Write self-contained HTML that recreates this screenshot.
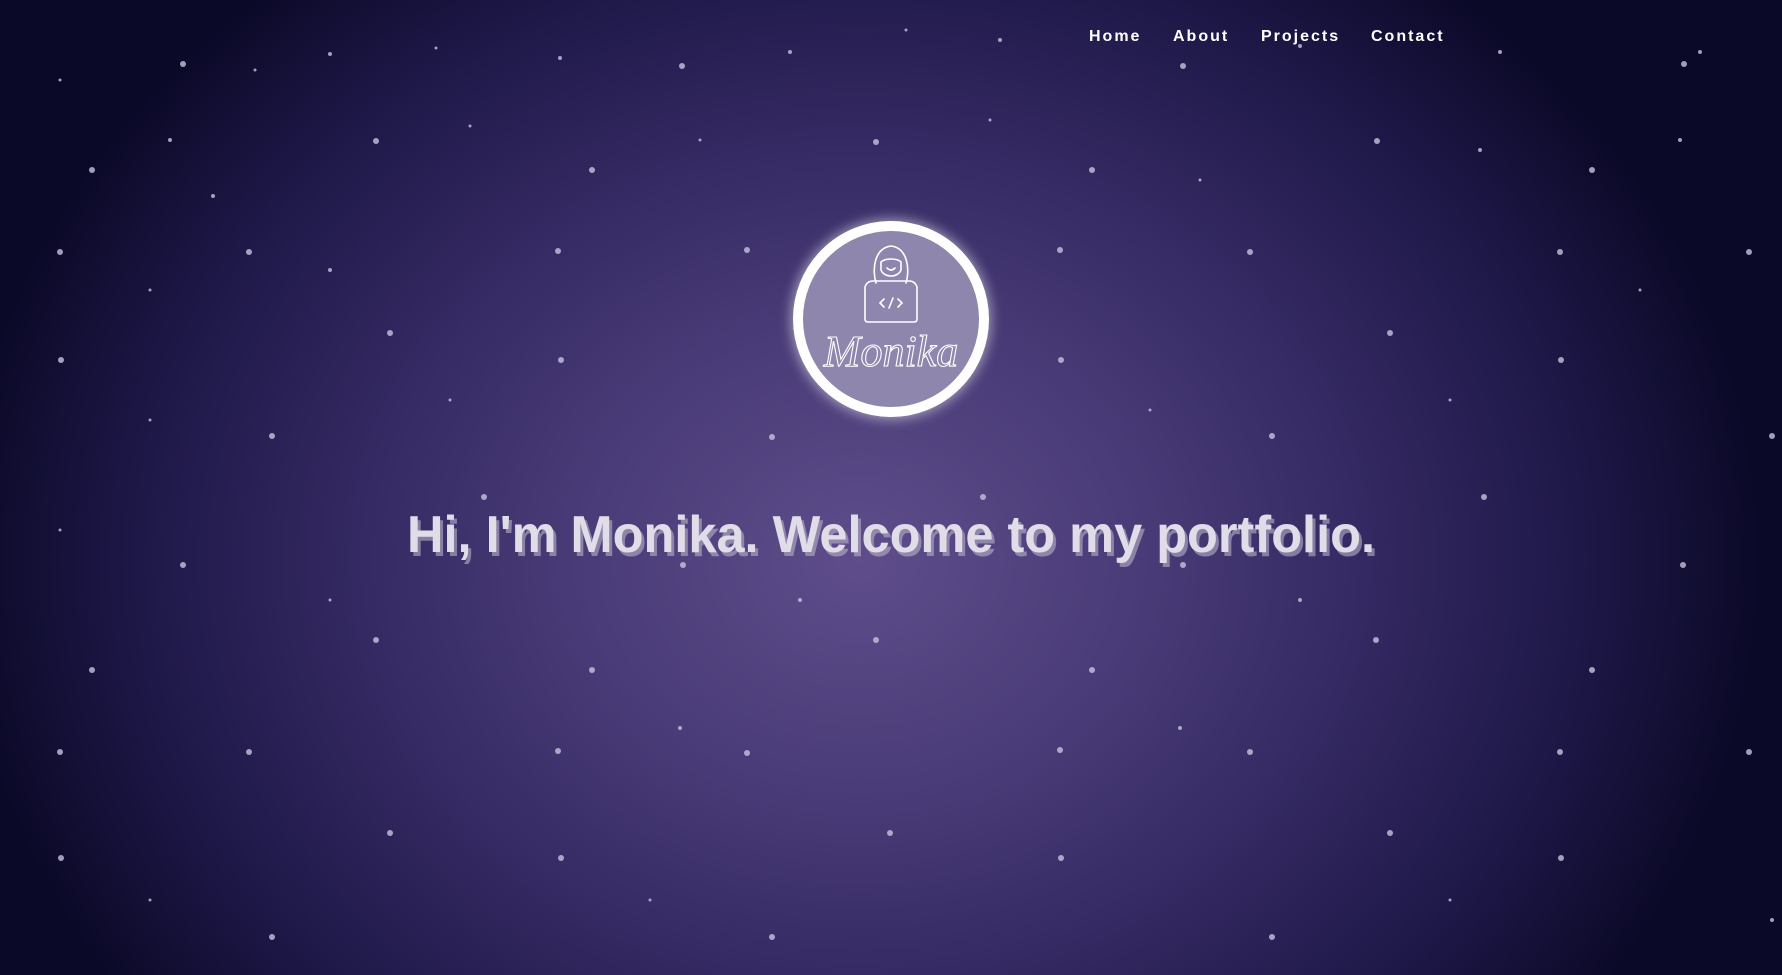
<!DOCTYPE html>
<html><head><meta charset="utf-8"><style>
html,body{margin:0;padding:0;width:1782px;height:975px;overflow:hidden}
body{background:radial-gradient(ellipse 900px 760px at 860px 560px,#5e4d8a 0%,#4a3c78 30%,#352a63 55%,#1e1848 80%,#0b0928 100%);position:relative;font-family:"Liberation Sans",sans-serif}
.nav{position:absolute;top:28px;font-weight:bold;font-size:16px;letter-spacing:2px;color:#fff}
svg{position:absolute;left:0;top:0}
</style></head><body>
<svg width="1782" height="975">
<g fill="#c9c3dc" opacity="0.8">
<circle cx="183" cy="64" r="3"/><circle cx="255" cy="70" r="1.5"/><circle cx="330" cy="54" r="2"/><circle cx="436" cy="48" r="1.5"/><circle cx="560" cy="58" r="2"/><circle cx="682" cy="66" r="3"/><circle cx="790" cy="52" r="2"/><circle cx="906" cy="30" r="1.5"/><circle cx="1000" cy="40" r="2"/><circle cx="1183" cy="66" r="3"/><circle cx="1300" cy="46" r="2"/><circle cx="1500" cy="52" r="2"/><circle cx="1684" cy="64" r="3"/><circle cx="1700" cy="52" r="2"/><circle cx="60" cy="80" r="1.5"/>
<circle cx="92" cy="170" r="3"/><circle cx="170" cy="140" r="2"/><circle cx="213" cy="196" r="2"/><circle cx="376" cy="141" r="3"/><circle cx="470" cy="126" r="1.5"/><circle cx="592" cy="170" r="3"/><circle cx="700" cy="140" r="1.5"/><circle cx="876" cy="142" r="3"/><circle cx="990" cy="120" r="1.5"/><circle cx="1092" cy="170" r="3"/><circle cx="1200" cy="180" r="1.5"/><circle cx="1377" cy="141" r="3"/><circle cx="1480" cy="150" r="2"/><circle cx="1592" cy="170" r="3"/><circle cx="1680" cy="140" r="2"/>
<circle cx="60" cy="252" r="3"/><circle cx="150" cy="290" r="1.5"/><circle cx="249" cy="252" r="3"/><circle cx="330" cy="270" r="2"/><circle cx="390" cy="333" r="3"/><circle cx="558" cy="251" r="3"/><circle cx="747" cy="250" r="3"/><circle cx="1060" cy="250" r="3"/><circle cx="1250" cy="252" r="3"/><circle cx="1390" cy="333" r="3"/><circle cx="1560" cy="252" r="3"/><circle cx="1749" cy="252" r="3"/><circle cx="1640" cy="290" r="1.5"/>
<circle cx="61" cy="360" r="3"/><circle cx="272" cy="436" r="3"/><circle cx="561" cy="360" r="3"/><circle cx="772" cy="437" r="3"/><circle cx="1061" cy="360" r="3"/><circle cx="1272" cy="436" r="3"/><circle cx="1561" cy="360" r="3"/><circle cx="1772" cy="436" r="3"/><circle cx="150" cy="420" r="1.5"/><circle cx="450" cy="400" r="1.5"/><circle cx="1150" cy="410" r="1.5"/><circle cx="1450" cy="400" r="1.5"/>
<circle cx="484" cy="497" r="3"/><circle cx="983" cy="497" r="3"/><circle cx="1484" cy="497" r="3"/><circle cx="183" cy="565" r="3"/><circle cx="683" cy="565" r="3"/><circle cx="1183" cy="565" r="3"/><circle cx="1683" cy="565" r="3"/><circle cx="60" cy="530" r="1.5"/><circle cx="330" cy="600" r="1.5"/><circle cx="800" cy="600" r="2"/><circle cx="1300" cy="600" r="2"/>
<circle cx="92" cy="670" r="3"/><circle cx="376" cy="640" r="3"/><circle cx="592" cy="670" r="3"/><circle cx="876" cy="640" r="3"/><circle cx="1092" cy="670" r="3"/><circle cx="1376" cy="640" r="3"/><circle cx="1592" cy="670" r="3"/><circle cx="680" cy="728" r="2"/><circle cx="1180" cy="728" r="2"/>
<circle cx="60" cy="752" r="3"/><circle cx="249" cy="752" r="3"/><circle cx="558" cy="751" r="3"/><circle cx="747" cy="753" r="3"/><circle cx="1060" cy="750" r="3"/><circle cx="1250" cy="752" r="3"/><circle cx="1560" cy="752" r="3"/><circle cx="1749" cy="752" r="3"/>
<circle cx="61" cy="858" r="3"/><circle cx="390" cy="833" r="3"/><circle cx="561" cy="858" r="3"/><circle cx="890" cy="833" r="3"/><circle cx="1061" cy="858" r="3"/><circle cx="1390" cy="833" r="3"/><circle cx="1561" cy="858" r="3"/><circle cx="272" cy="937" r="3"/><circle cx="772" cy="937" r="3"/><circle cx="1272" cy="937" r="3"/><circle cx="1772" cy="920" r="2"/><circle cx="150" cy="900" r="1.5"/><circle cx="650" cy="900" r="1.5"/><circle cx="1450" cy="900" r="1.5"/>
</g>
<defs><filter id="gl" x="-30%" y="-30%" width="160%" height="160%"><feGaussianBlur stdDeviation="6"/></filter></defs>
<circle cx="891" cy="319" r="100" fill="#fff" opacity="0.5" filter="url(#gl)"/>
<circle cx="891" cy="319" r="93" fill="#8e86ad" stroke="#fff" stroke-width="10"/>
<g fill="none" stroke="#fff" stroke-width="1.6" stroke-linecap="round">
<path d="M876 283 C872 270 874 248 891 246 C908 248 910 270 906 283"/>
<path d="M881 262 C885 258 897 258 901 262 L901 270 C898 278 884 278 881 270 Z"/>
<path d="M887 268 Q891 272 895 268"/>
<path d="M865 287 Q867 281 873 281 L909 281 Q915 281 917 287 L917 319 Q917 322 914 322 L868 322 Q865 322 865 319 Z"/>
<path d="M884 299 L880 303 L884 307 M898 299 L902 303 L898 307 M893 298 L889 308"/>
</g>
<text x="891" y="366" text-anchor="middle" font-family="Liberation Serif,serif" font-style="italic" font-size="44" fill="none" stroke="#fff" stroke-width="1.1">Monika</text>
<text x="407" y="552" textLength="968" lengthAdjust="spacingAndGlyphs" font-family="Liberation Sans,sans-serif" font-weight="bold" font-size="52" fill="#b9b3c9" opacity="0.6" transform="translate(3,4)">Hi, I'm Monika. Welcome to my portfolio.</text>
<text x="407" y="552" textLength="968" lengthAdjust="spacingAndGlyphs" font-family="Liberation Sans,sans-serif" font-weight="bold" font-size="52" fill="#e0dce8">Hi, I'm Monika. Welcome to my portfolio.</text>
</svg>
<div class="nav" style="left:1089px">Home</div>
<div class="nav" style="left:1173px">About</div>
<div class="nav" style="left:1261px">Projects</div>
<div class="nav" style="left:1371px">Contact</div>
</body></html>
